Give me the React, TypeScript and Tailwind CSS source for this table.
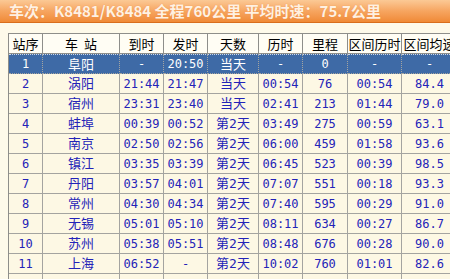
import React from "react";

const rows: string[][] = [
  ["1", "阜阳", "-", "20:50", "当天", "-", "0", "-", "-"],
  ["2", "涡阳", "21:44", "21:47", "当天", "00:54", "76", "00:54", "84.4"],
  ["3", "宿州", "23:31", "23:40", "当天", "02:41", "213", "01:44", "79.0"],
  ["4", "蚌埠", "00:39", "00:52", "第2天", "03:49", "275", "00:59", "63.1"],
  ["5", "南京", "02:50", "02:56", "第2天", "06:00", "459", "01:58", "93.6"],
  ["6", "镇江", "03:35", "03:39", "第2天", "06:45", "523", "00:39", "98.5"],
  ["7", "丹阳", "03:57", "04:01", "第2天", "07:07", "551", "00:18", "93.3"],
  ["8", "常州", "04:30", "04:34", "第2天", "07:40", "595", "00:29", "91.0"],
  ["9", "无锡", "05:01", "05:10", "第2天", "08:11", "634", "00:27", "86.7"],
  ["10", "苏州", "05:38", "05:51", "第2天", "08:48", "676", "00:28", "90.0"],
  ["11", "上海", "06:52", "-", "第2天", "10:02", "760", "01:01", "82.6"],
];

const headers = ["站序", "车\u00a0\u00a0站", "到时", "发时", "天数", "历时", "里程", "区间历时", "区间均速"];

const cols = "grid grid-cols-[34px_77px_44px_44px_51px_44px_45px_54px_56px]";

function Cell({ text, sel }: { text: string; sel?: boolean }) {
  const isCjk = /[\u4e00-\u9fff]/.test(text);
  return (
    <div
      className={
        "h-[20px] border-r border-b border-[#a4a4a0] flex items-center justify-center whitespace-nowrap overflow-hidden " +
        (sel
          ? "bg-[#3e6aa6] text-white border-t border-t-[#cfd8e6] border-dotted"
          : "bg-[#fdf8e4] text-[#2323b8]")
      }
    >
      <span
        className={isCjk ? "text-[13px] leading-none" : "text-[12px] leading-none"}
        style={{ fontFamily: '"DejaVu Sans Mono", "Noto Sans CJK SC", monospace' }}
      >
        {text}
      </span>
    </div>
  );
}

export default function App() {
  return (
    <div className="w-[450px] h-[279px] overflow-hidden bg-[#fefaea]">
      <div
        className="h-[23px] bg-gradient-to-b from-[#fbc995] via-[#f6a560] to-[#f08a35] border-b border-[#d96e1c] flex items-center pl-[9px] text-[15px] font-bold text-[#fff1e2] whitespace-nowrap"
        style={{ fontFamily: '"Noto Sans CJK SC", sans-serif', textShadow: "0 0 1px #e88a40" }}
      >
        车次：K8481/K8484 全程760公里 平均时速：75.7公里
      </div>
      <div className="pl-[8px] pt-[10px]">
        <div className="w-[460px] border-l border-t border-[#8e8e8a]">
          <div className={cols}>
            {headers.map((h, i) => (
              <div
                key={i}
                className="h-[20px] border-r border-b border-[#8e8e8a] bg-[#fffdf4] flex items-center justify-center text-[13px] text-black whitespace-nowrap"
                style={{ fontFamily: '"Noto Sans CJK SC", sans-serif' }}
              >
                {h}
              </div>
            ))}
          </div>
          {rows.map((r, ri) => (
            <div key={ri} className={cols}>
              {r.map((c, ci) => (
                <Cell key={ci} text={c} sel={ri === 0} />
              ))}
            </div>
          ))}
          <div className={cols}>
            {headers.map((_, i) => (
              <div key={i} className="h-[20px] border-r border-[#a4a4a0] bg-[#fdf8e4]" />
            ))}
          </div>
        </div>
      </div>
    </div>
  );
}
